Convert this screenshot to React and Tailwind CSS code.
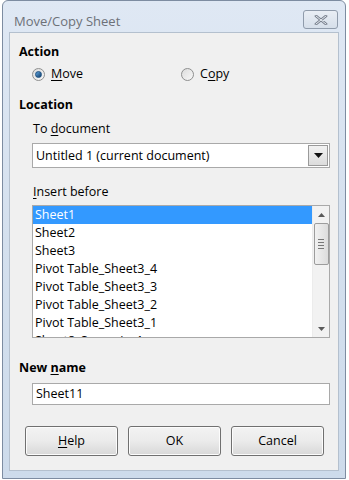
import React from "react";

function Radio({ checked }) {
  return (
    <span className="relative inline-flex w-[13px] h-[13px] rounded-full border border-[#8e8f8f] bg-gradient-to-br from-[#dcdcdc] to-[#f8f8f8] items-center justify-center shrink-0">
      {checked && (
        <span className="w-[7px] h-[7px] rounded-full bg-gradient-to-br from-[#5fa6e0] to-[#123e6b] border border-[#1c4f80]" />
      )}
    </span>
  );
}

function Btn({ children }) {
  return (
    <div className="w-[93px] h-[30px] rounded-[3px] border border-[#707070] bg-gradient-to-b from-[#f3f3f3] via-[#ebebeb] to-[#d8d8d8] flex items-center justify-center shadow-[inset_0_0_0_1px_#fcfcfc] text-black">
      {children}
    </div>
  );
}

const rows = [
  "Sheet1",
  "Sheet2",
  "Sheet3",
  "Pivot Table_Sheet3_4",
  "Pivot Table_Sheet3_3",
  "Pivot Table_Sheet3_2",
  "Pivot Table_Sheet3_1",
  "Sheet8_Scenario_1",
];

export default function App() {
  return (
    <div
      className="w-[349px] h-[480px] bg-white text-[12.5px] leading-[16px] text-black"
      style={{ fontFamily: '"Open Sans", "Noto Sans", sans-serif' }}
    >
      <div className="ml-[2px] w-[344px] h-[479px] border border-[#7d8ca1] rounded-t-[6px] bg-gradient-to-b from-[#dfe8f4] via-[#d4e0ee] to-[#cddbeb] flex flex-col px-[6px] pb-[7px]">
        <div className="h-[31px] flex items-start shrink-0">
          <div className="pl-[5px] pt-[12px] text-[13px] text-[#6d7178]">Move/Copy Sheet</div>
          <div className="ml-auto mt-[9px] mr-[1px] w-[35px] h-[19px] rounded-[3px] border border-[#8f9bab] bg-gradient-to-b from-[#e9eef5] to-[#d6dfea] flex items-center justify-center">
            <svg width="14" height="10" viewBox="0 0 14 10">
              <path d="M2 1 L12 9 M12 1 L2 9" stroke="#7b8390" strokeWidth="2.8" strokeLinecap="round" />
              <path d="M2 1 L12 9 M12 1 L2 9" stroke="#e6ebf1" strokeWidth="1" strokeLinecap="round" />
            </svg>
          </div>
        </div>
        <div className="flex-1 bg-[#f0f0f0] border border-[#b4c0ce] flex flex-col pt-[11px] pl-[9px] pr-[7px]">
          <div className="font-bold">Action</div>
          <div className="mt-[6px] flex items-center h-[16px]">
            <div className="ml-[13px] w-[149px] flex items-center gap-[6px]">
              <Radio checked />
              <span>
                <span className="underline underline-offset-2">M</span>ove
              </span>
            </div>
            <div className="flex items-center gap-[6px]">
              <Radio />
              <span>
                C<span className="underline underline-offset-2">o</span>py
              </span>
            </div>
          </div>
          <div className="mt-[15px] font-bold">Location</div>
          <div className="mt-[8px] ml-[14px]">
            To <span className="underline underline-offset-2">d</span>ocument
          </div>
          <div className="mt-[6px] ml-[13px] mr-[1px] h-[25px] border border-[#a9a9a9] bg-white flex items-center">
            <span className="pl-[3px] flex-1">Untitled 1 (current document)</span>
            <div className="w-[20px] h-[21px] mr-[1px] border border-[#9a9a9a] bg-gradient-to-b from-[#f2f2f2] to-[#dcdcdc] flex items-center justify-center">
              <svg width="9" height="5" viewBox="0 0 9 5">
                <path d="M0 0 H9 L4.5 5 Z" fill="#111" />
              </svg>
            </div>
          </div>
          <div className="mt-[16px] ml-[14px]">
            <span className="underline underline-offset-2">I</span>nsert before
          </div>
          <div className="mt-[5px] ml-[13px] mr-[1px] h-[133px] border border-[#a9a9a9] bg-white flex overflow-hidden">
            <div className="flex-1 flex flex-col overflow-hidden">
              {rows.map((r, i) => (
                <div
                  key={r}
                  className={
                    "h-[18px] shrink-0 flex items-center pl-[2px] " +
                    (i === 0 ? "bg-[#3399ff] text-white" : "")
                  }
                >
                  {r}
                </div>
              ))}
            </div>
            <div className="w-[17px] bg-[#f2f2f2] border-l border-[#ececec] flex flex-col items-center">
              <div className="h-[17px] flex items-center justify-center">
                <svg width="7" height="4" viewBox="0 0 7 4">
                  <path d="M0 4 L3.5 0 L7 4 Z" fill="#5a5a5a" />
                </svg>
              </div>
              <div className="w-[15px] h-[42px] rounded-[2px] border border-[#9c9c9c] bg-gradient-to-r from-[#f1f1f1] to-[#dcdcdc] flex flex-col items-center justify-center gap-[2px]">
                <div className="w-[6px] h-[1px] bg-[#777]" />
                <div className="w-[6px] h-[1px] bg-[#777]" />
                <div className="w-[6px] h-[1px] bg-[#777]" />
                <div className="w-[6px] h-[1px] bg-[#777]" />
              </div>
              <div className="flex-1" />
              <div className="h-[17px] flex items-center justify-center">
                <svg width="7" height="4" viewBox="0 0 7 4">
                  <path d="M0 0 L7 0 L3.5 4 Z" fill="#5a5a5a" />
                </svg>
              </div>
            </div>
          </div>
          <div className="mt-[22px] font-bold">
            New <span className="underline underline-offset-2">n</span>ame
          </div>
          <div className="mt-[7px] ml-[13px] mr-[1px] h-[22px] border border-[#a9a9a9] bg-white flex items-center pl-[3px]">
            Sheet11
          </div>
          <div className="mt-[21px] ml-[6px] flex gap-[10px]">
            <Btn>
              <span>
                <span className="underline underline-offset-2">H</span>elp
              </span>
            </Btn>
            <Btn>OK</Btn>
            <Btn>Cancel</Btn>
          </div>
        </div>
      </div>
    </div>
  );
}
